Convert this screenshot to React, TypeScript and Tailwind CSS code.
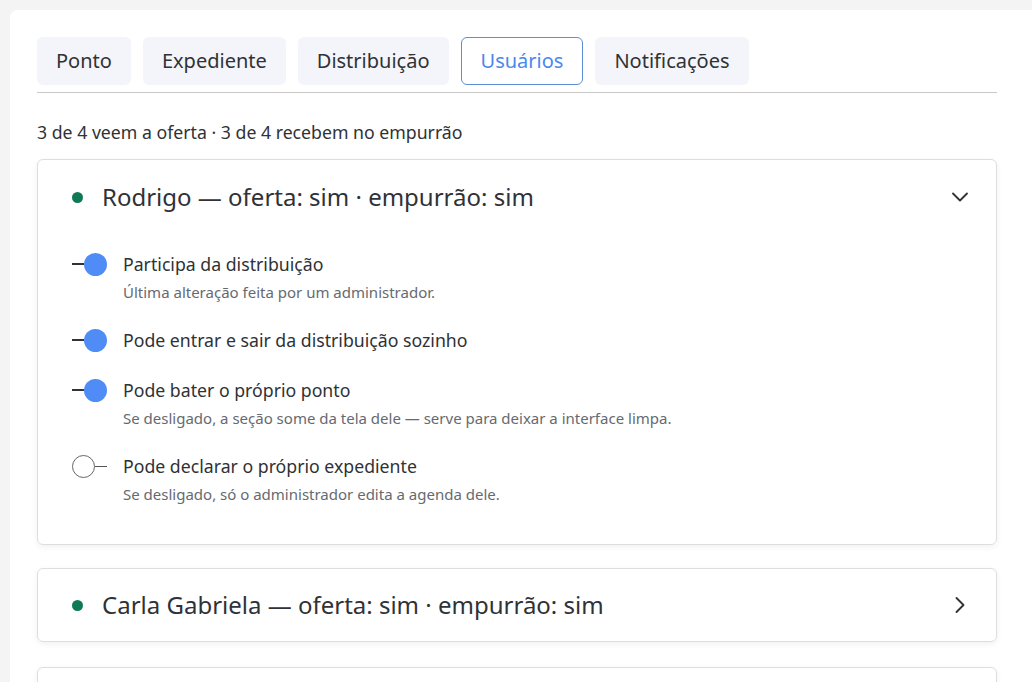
import { ChevronDown, ChevronRight } from "lucide-react"

const tabs = ["Ponto", "Expediente", "Distribuição", "Usuários", "Notificações"]

const toggles = [
  { on: true, label: "Participa da distribuição", hint: "Última alteração feita por um administrador." },
  { on: true, label: "Pode entrar e sair da distribuição sozinho", hint: "" },
  { on: true, label: "Pode bater o próprio ponto", hint: "Se desligado, a seção some da tela dele — serve para deixar a interface limpa." },
  { on: false, label: "Pode declarar o próprio expediente", hint: "Se desligado, só o administrador edita a agenda dele." },
]

function Toggle({ on }: { on: boolean }) {
  return (
    <div className="flex items-center w-[36px] h-[26px] shrink-0">
      {on ? (
        <>
          <div className="w-[12px] h-[1.5px] bg-[#333]" />
          <div className="w-[23px] h-[23px] rounded-full bg-[#4f8cf6]" />
        </>
      ) : (
        <>
          <div className="w-[23px] h-[23px] rounded-full bg-white border border-[#666]" />
          <div className="w-[12px] h-[1px] bg-[#555]" />
        </>
      )}
    </div>
  )
}

export default function App() {
  return (
    <div
      className="min-h-screen bg-[#f4f4f4] pl-[10px] pt-[10px] overflow-hidden text-[#2f3236]"
      style={{ fontFamily: "'Noto Sans', 'Open Sans', sans-serif" }}
    >
      <div className="bg-white rounded-tl-[8px] pl-[27px] pr-[35px] pt-[27px] pb-6 h-[700px]">
        {/* Tabs */}
        <div className="flex gap-3 pb-[7px] border-b border-[#c9c9c9]">
          {tabs.map((t) =>
            t === "Usuários" ? (
              <button
                key={t}
                className="h-[48px] px-[19px] rounded-[6px] border border-[#5b8fd6] bg-white text-[20px] text-[#4a88ee]"
              >
                {t}
              </button>
            ) : (
              <button key={t} className="h-[48px] px-[19px] rounded-[6px] bg-[#f4f5fa] text-[20px] text-[#2f3236]">
                {t}
              </button>
            )
          )}
        </div>

        <p className="mt-[26px] text-[17.7px] leading-[26px]">3 de 4 veem a oferta · 3 de 4 recebem no empurrão</p>

        {/* Rodrigo */}
        <div className="mt-[14px] rounded-[6px] border border-[#dedede] shadow-[0_2px_6px_rgba(0,0,0,0.06)]">
          <div className="flex items-center h-[74px] pl-[34px] pr-[22px]">
            <span className="w-[11px] h-[11px] rounded-full bg-[#0e7a55]" />
            <span className="ml-[19px] text-[24px]">Rodrigo — oferta: sim · empurrão: sim</span>
            <ChevronDown className="ml-auto w-[28px] h-[28px] text-[#333]" strokeWidth={1.6} />
          </div>
          <div className="pl-[34px] pt-[17px] pb-[39px] flex flex-col gap-[24px]">
            {toggles.map((t) => (
              <div key={t.label} className="flex items-start gap-[15px]">
                <Toggle on={t.on} />
                <div>
                  <div className="text-[17.7px] leading-[26px]">{t.label}</div>
                  {t.hint && <div className="mt-[5px] text-[15px] leading-[21px] text-[#666a70]">{t.hint}</div>}
                </div>
              </div>
            ))}
          </div>
        </div>

        {/* Carla */}
        <div className="mt-[23px] rounded-[6px] border border-[#dedede] shadow-[0_2px_6px_rgba(0,0,0,0.06)]">
          <div className="flex items-center h-[72px] pl-[34px] pr-[22px]">
            <span className="w-[11px] h-[11px] rounded-full bg-[#0e7a55]" />
            <span className="ml-[19px] text-[24px]">Carla Gabriela — oferta: sim · empurrão: sim</span>
            <ChevronRight className="ml-auto w-[28px] h-[28px] text-[#333]" strokeWidth={1.6} />
          </div>
        </div>

        <div className="mt-[25px] h-[72px] rounded-[6px] border border-[#dedede] shadow-[0_2px_6px_rgba(0,0,0,0.06)]" />
      </div>
    </div>
  )
}
